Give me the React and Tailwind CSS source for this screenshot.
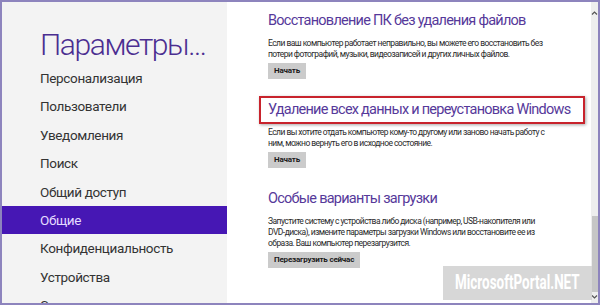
const menu = [
  'Персонализация',
  'Пользователи',
  'Уведомления',
  'Поиск',
  'Общий доступ',
  'Общие',
  'Конфиденциальность',
  'Устройства',
  'Специальные возможности',
];

function Section({ title, lines, button, boxed }) {
  return (
    <div className="flex flex-col items-start">
      <div
        className={
          boxed
            ? '-ml-[9px] pl-[7px] pr-[13px] h-[28px] flex items-center border-2 border-[#c8232c] shadow-[1px_1px_3px_rgba(0,0,0,0.35)]'
            : 'h-[28px] flex items-center'
        }
      >
        <h2 className="text-[14.5px] leading-none text-[#56399a] tracking-[-0.75px] whitespace-nowrap">{title}</h2>
      </div>
      <p className="mt-[3px] text-[8.5px] leading-[11px] text-[#2a2a2a] tracking-[-0.55px]">
        {lines.map((l, i) => (
          <span key={i} className="block whitespace-nowrap">
            {l}
          </span>
        ))}
      </p>
      <button
        type="button"
        className="mt-[3px] h-[16px] px-[6px] bg-[#cbcbcb] text-[8px] font-bold text-[#1a1a1a] leading-none tracking-[-0.2px]"
      >
        {button}
      </button>
    </div>
  );
}

export default function App() {
  return (
    <div
      className="w-[600px] h-[305px] flex border-2 border-[#8d84bd] overflow-hidden bg-white"
      style={{ fontFamily: 'Roboto, "Noto Sans", sans-serif' }}
    >
      <aside className="w-[225px] shrink-0 bg-[#f3f3f3] flex flex-col">
        <h1 className="mt-[25px] ml-[38px] text-[30px] leading-[36px] font-light text-[#4b2e91] tracking-[-1.4px] whitespace-nowrap">
          Параметры...
        </h1>
        <ul className="mt-[1px] flex flex-col">
          {menu.map((m) => (
            <li
              key={m}
              className={
                m === 'Общие'
                  ? 'h-[28.4px] shrink-0 flex items-center pl-[38px] bg-[#4617b4] text-[#e4dcff] text-[13.5px] tracking-[-0.35px] whitespace-nowrap'
                  : 'h-[28.4px] shrink-0 flex items-center pl-[38px] text-[#333333] text-[13.5px] tracking-[-0.35px] whitespace-nowrap'
              }
            >
              {m}
            </li>
          ))}
        </ul>
      </aside>

      <main className="flex-1 min-w-0 relative flex">
        <div className="flex-1 min-w-0 flex flex-col gap-[17px] pl-[41px] pt-[5px]">
          <Section
            title="Восстановление ПК без удаления файлов"
            lines={[
              'Если ваш компьютер работает неправильно, вы можете его восстановить без',
              'потери фотографий, музыки, видеозаписей и других личных файлов.',
            ]}
            button="Начать"
          />
          <Section
            boxed
            title="Удаление всех данных и переустановка Windows"
            lines={[
              'Если вы хотите отдать компьютер кому-то другому или заново начать работу с',
              'ним, можно вернуть его в исходное состояние.',
            ]}
            button="Начать"
          />
          <Section
            title="Особые варианты загрузки"
            lines={[
              'Запустите систему с устройства либо диска (например, USB-накопителя или',
              'DVD-диска), измените параметры загрузки Windows или восстановите ее из',
              'образа. Ваш компьютер перезагрузится.',
            ]}
            button="Перезагрузить сейчас"
          />
        </div>

        <div className="w-[7px] shrink-0 bg-[#eeeeee] flex flex-col items-center">
          <svg width="7" height="6" viewBox="0 0 7 6" className="mt-[8px]">
            <path d="M1 4.5 L3.5 2 L6 4.5" fill="none" stroke="#555" strokeWidth="1.2" />
          </svg>
          <div className="flex-1" />
          <div className="w-[6px] h-[76px] bg-[#c6c6c6]" />
          <svg width="7" height="6" viewBox="0 0 7 6" className="mb-[3px] mt-[2px]">
            <path d="M1 1.5 L3.5 4 L6 1.5" fill="none" stroke="#555" strokeWidth="1.2" />
          </svg>
        </div>

        <div className="absolute right-[6px] bottom-[3px] w-[149px] h-[34px] bg-[#d3d3d3]/90 flex items-center justify-center overflow-hidden">
          <span className="text-white text-[21px] font-bold whitespace-nowrap scale-x-[0.64]">
            MicrosoftPortal.NET
          </span>
        </div>
      </main>
    </div>
  );
}
